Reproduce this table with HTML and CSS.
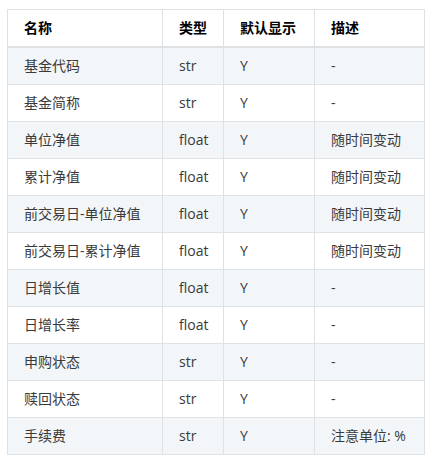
FILE: index.html
```html
<!DOCTYPE html>
<html lang="zh-CN">
<head>
<meta charset="utf-8">
<title>基金字段</title>
<link rel="stylesheet" href="styles.css">
</head>
<body>
<table class="fields">
  <colgroup>
    <col class="c-name">
    <col class="c-type">
    <col class="c-show">
    <col class="c-desc">
  </colgroup>
  <thead>
    <tr><th>名称</th><th>类型</th><th>默认显示</th><th>描述</th></tr>
  </thead>
  <tbody>
    <tr><td>基金代码</td><td>str</td><td>Y</td><td>-</td></tr>
    <tr><td>基金简称</td><td>str</td><td>Y</td><td>-</td></tr>
    <tr><td>单位净值</td><td>float</td><td>Y</td><td>随时间变动</td></tr>
    <tr><td>累计净值</td><td>float</td><td>Y</td><td>随时间变动</td></tr>
    <tr><td>前交易日-单位净值</td><td>float</td><td>Y</td><td>随时间变动</td></tr>
    <tr><td>前交易日-累计净值</td><td>float</td><td>Y</td><td>随时间变动</td></tr>
    <tr><td>日增长值</td><td>float</td><td>Y</td><td>-</td></tr>
    <tr><td>日增长率</td><td>float</td><td>Y</td><td>-</td></tr>
    <tr><td>申购状态</td><td>str</td><td>Y</td><td>-</td></tr>
    <tr><td>赎回状态</td><td>str</td><td>Y</td><td>-</td></tr>
    <tr><td>手续费</td><td>str</td><td>Y</td><td>注意单位: %</td></tr>
  </tbody>
</table>
</body>
</html>
```
FILE: styles.css
```css
html, body {
  margin: 0;
  padding: 0;
  background: #ffffff;
}

.fields {
  margin: 9px 0 0 7px;
  border-collapse: separate;
  border-spacing: 0;
  table-layout: fixed;
  width: 418px;
  border-left: 1px solid #dfe2e5;
  border-top: 1px solid #dfe2e5;
  font-family: "Open Sans", "Noto Sans CJK SC", sans-serif;
  font-size: 14px;
  line-height: 20px;
  color: #3a3a3a;
}

.c-name { width: 155px; }
.c-type { width: 61px; }
.c-show { width: 91px; }
.c-desc { width: 110px; }

.fields th,
.fields td {
  text-align: left;
  padding: 8px 0 8px 16px;
  border-right: 1px solid #dfe2e5;
  border-bottom: 1px solid #dfe2e5;
  white-space: nowrap;
  overflow: hidden;
}

.fields th {
  height: 19px;
  padding-top: 8px;
  padding-bottom: 8px;
  font-weight: bold;
  color: #000000;
  border-bottom: 2px solid #dfe2e5;
}

.fields td {
  height: 20px;
}

.fields tbody tr:nth-child(odd) td {
  background: #f3f6f8;
}
```
